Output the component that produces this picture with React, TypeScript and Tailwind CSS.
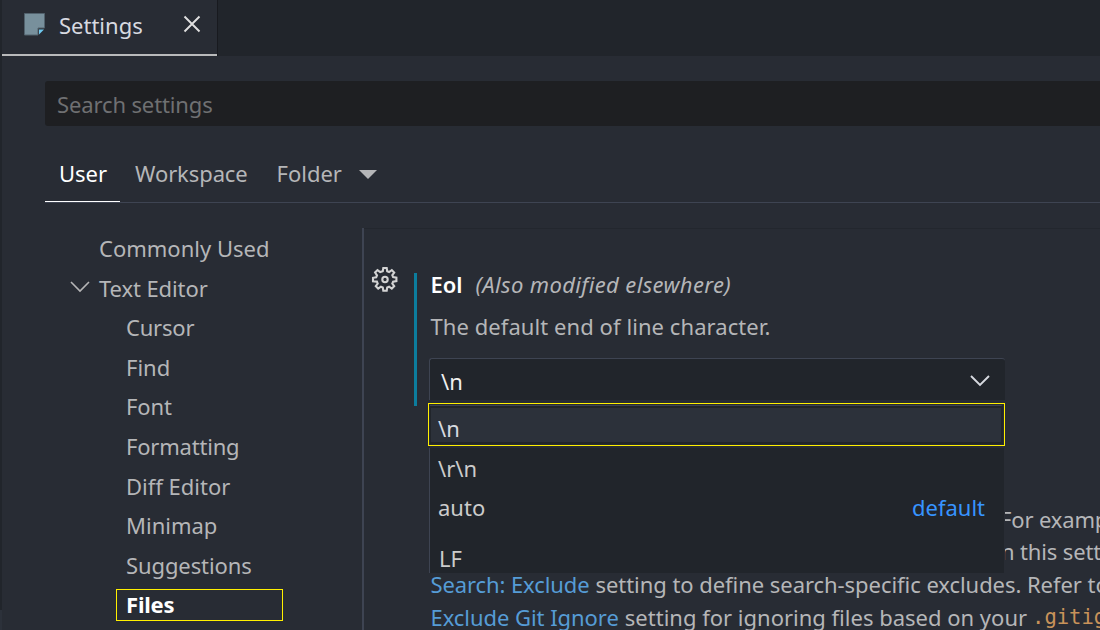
import React from "react";

const treeItems = [
  { label: "Cursor", tracking: "tracking-[-0.2px]" },
  { label: "Find", tracking: "tracking-[0px]" },
  { label: "Font", tracking: "tracking-[-0.1px]" },
  { label: "Formatting", tracking: "tracking-[-0.2px]" },
  { label: "Diff Editor", tracking: "tracking-[0px] pt-px" },
  { label: "Minimap", tracking: "tracking-[0px]" },
  { label: "Suggestions", tracking: "tracking-[-0.1px]" },
];

function Gear() {
  return (
    <svg width="28" height="28" viewBox="0 0 28 28" fill="none" stroke="#d3d3d3" strokeWidth="2.1" strokeLinejoin="miter">
      <path d="M11.8 5.2 12.3 2h3.4l.5 3.2 1.9.8 2.7-1.9 2.4 2.4-1.9 2.7.8 1.9 3.3.6v3.3l-3.3.6-.8 1.9 1.9 2.7-2.4 2.4-2.7-1.9-1.9.8-.5 3.3h-3.4l-.5-3.3-1.9-.8-2.7 1.9-2.4-2.4 1.9-2.7-.8-1.9L2 15.2v-3.4l3.2-.6.8-1.9L4.1 6.5l2.4-2.4L9.2 6z" />
      <circle cx="14" cy="13.5" r="2.7" />
    </svg>
  );
}

function TabBar() {
  return (
    <div className="flex h-[56px] bg-[#21252b]">
      <div className="flex h-[56px] w-[215px] items-center border-b-2 border-[#b9babb] bg-[#282c34] pl-[22px] text-[#d7dae0]">
        <svg width="22" height="24" viewBox="0 0 22 24" className="mb-[4px]">
          <path d="M.5 .5h20v14.5H14v7H.5z" fill="#78909c" stroke="#52626d" />
          <path d="M15 16.5h5L15 21.5z" fill="#6fc8ee" />
        </svg>
        <span className="mb-[5px] ml-[13px] w-[86px]">Settings</span>
        <svg width="18" height="18" viewBox="0 0 18 18" className="ml-[38px] mb-[7px]" stroke="#e0e0e0" strokeWidth="1.9">
          <path d="M1.5 1.5l15 15M16.5 1.5l-15 15" />
        </svg>
      </div>
      <div className="w-px bg-[#181a1f]" />
    </div>
  );
}

function Sidebar() {
  return (
    <nav className="h-[402px] w-[317px] shrink-0">
      <div className="flex h-[39.6px] items-center pl-[54px]">Commonly Used</div>
      <div className="flex h-[39.6px] items-center pl-[25px] pt-[2px] tracking-[-0.1px]">
        <svg width="20" height="12" viewBox="0 0 20 12" fill="none" stroke="#b5b5b6" strokeWidth="1.6" className="mb-[3px] mr-[9px]">
          <path d="M1 1l9 9 9-9" />
        </svg>
        Text Editor
      </div>
      {treeItems.map((item) => (
        <div key={item.label} className={`flex h-[39.6px] items-center pl-[81px] ${item.tracking}`}>
          {item.label}
        </div>
      ))}
      <div className="ml-[71px] mt-[5px] flex h-[32px] w-[167px] items-center border border-[#fff000] pb-[2px] pl-[9px] font-bold tracking-[-0.2px] text-white">
        Files
      </div>
    </nav>
  );
}

function Dropdown() {
  return (
    <div className="absolute left-[428px] top-[400px] w-[577px] bg-[#282c34] pt-[3px]">
      <div className="h-[43px] border border-[#fff000] p-px">
        <div className="h-full border-b-[3px] border-r-2 border-t border-b-[#21252b] border-r-[#21252b] border-t-[#3e4452] bg-[#21252b] pl-px pt-[2px]">
          <div className="flex h-[34px] items-center bg-[#2c313a] pl-[7px] pt-[5px] text-[#d7dae0]">\n</div>
        </div>
      </div>
      <div className="ml-px mr-px mt-[2px] h-[125px] border-l border-[#3e4452] bg-[#21252b] pl-[8px] text-[#cccccc]">
        <div className="flex h-[40px] items-center">\r\n</div>
        <div className="flex h-[38px] items-center justify-between pr-[19px]">
          <span>auto</span>
          <span className="text-[#3794ff]">default</span>
        </div>
        <div className="flex h-[47px] items-end pl-px"><span className="h-[31px]">LF</span></div>
      </div>
    </div>
  );
}

function Details() {
  return (
    <main className="h-[402px] min-w-0 flex-1 overflow-hidden border-l-2 border-[#3e4452] pl-[8px]">
      <div className="-ml-[8px] h-px bg-[#23272e]" />
      <div className="flex">
        <div className="-ml-px mr-px mt-[37px] h-[28px] w-[28px]"><Gear /></div>
        <div className="ml-[14px] mt-[44px] h-[133px] w-[3px] bg-[#0c7d9d]" />
        <div className="ml-[12px] mt-[34px] min-w-0 flex-1 whitespace-nowrap">
          <div className="flex h-[42px] items-center pl-[1.5px]">
            <span className="font-semibold text-white">Eol</span>
            <span className="ml-[13px] italic tracking-[0.37px]">(Also modified elsewhere)</span>
          </div>
          <div className="flex h-[42px] items-center pl-[1.5px] tracking-[0.07px]">The default end of line character.</div>
          <div className="mt-[11px] flex h-[42px] w-[576px] items-center justify-between rounded-t-[3px] border-l border-t border-[#3e4452] bg-[#21252b] pl-[11px] pr-[15px] pt-[3px] text-[#f0f0f0]">
            <span>\n</span>
            <svg width="20" height="12" viewBox="0 0 20 12" fill="none" stroke="#d7dae0" strokeWidth="1.9">
              <path d="M1 1l9 9 9-9" />
            </svg>
          </div>
          <div className="mt-[103px] flex h-[32.5px] items-center pl-[571px] tracking-[-0.15px]">For example</div>
          <div className="flex h-[32.5px] items-center pb-px pl-[572px] tracking-[-0.15px]">n this setting</div>
          <div className="flex h-[32.5px] items-center pl-[1.5px]">
            <span className="tracking-[-0.1px] text-[#569cd6]">Search: Exclude</span>
            <span className="ml-[6px] tracking-[-0.05px]">setting to define search-specific excludes. Refer to the</span>
          </div>
          <div className="flex h-[32.5px] items-center pl-[1.5px]">
            <span className="tracking-[-0.05px] text-[#569cd6]">Exclude Git Ignore</span>
            <span className="ml-[6px]">setting for ignoring files based on your</span>
            <span className="ml-[5px] font-['DejaVu_Sans_Mono',monospace] text-[20.5px] text-[#c8935a]">.gitignore</span>
          </div>
        </div>
      </div>
    </main>
  );
}

export default function App() {
  return (
    <div className="relative flex h-[630px] w-[1100px] overflow-hidden bg-[#282c34] font-['Noto_Sans',sans-serif] text-[22px] leading-[32px] text-[#b5b6b8]">
      <div className="flex w-[2px] shrink-0 flex-col bg-[#21252b]">
        <div className="mt-[610px] flex-1 bg-[#2c313a]" />
      </div>
      <div className="min-w-0 flex-1">
        <TabBar />
        <div className="pl-[43px] pt-[25px]">
          <div className="flex h-[45px] items-center rounded-l-[3px] bg-[#1e1f22] pl-[12px] pt-px tracking-[-0.13px] text-[#6f7072]">Search settings</div>
          <div className="mt-[19px] flex h-[58px] border-b border-[#3e4452]">
            <div className="flex h-[57px] w-[75px] items-center border-b border-white pl-[14px] text-white">User</div>
            <div className="flex h-[56px] w-[142px] items-center pl-[15px] tracking-[-0.1px]">Workspace</div>
            <div className="flex h-[56px] items-center pl-[14.5px]">Folder</div>
            <div className="ml-[17.5px] mt-[25px] h-0 w-0 border-x-[9px] border-t-[9px] border-x-transparent border-t-[#b5b6b8]" />
          </div>
        </div>
        <div className="mt-[25px] flex pl-[43px]">
          <Sidebar />
          <Details />
        </div>
      </div>
      <Dropdown />
    </div>
  );
}
